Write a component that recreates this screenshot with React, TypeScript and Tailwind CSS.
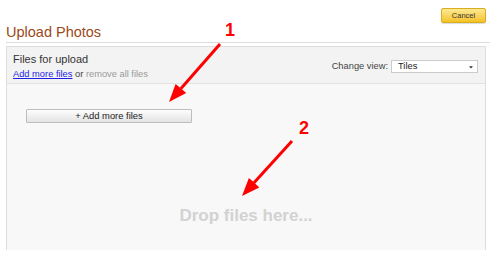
import { FaCaretDown } from "react-icons/fa";

function Arrows() {
  return (
    <svg className="absolute inset-0 pointer-events-none" width={496} height={260} viewBox="0 0 496 260">
      {/* arrow 1 */}
      <line x1={220} y1={44} x2={181} y2={88.5} stroke="#ff0000" strokeWidth={3} />
      <polygon points="169,102 186.2,93.1 180.5,88 175.6,83.9" fill="#ff0000" />
      {/* arrow 2 */}
      <line x1={292} y1={141} x2={254} y2={182.7} stroke="#ff0000" strokeWidth={3} />
      <polygon points="242,196 259.3,187.4 253.6,182 248.9,178" fill="#ff0000" />
    </svg>
  );
}

export default function App() {
  return (
    <div className="relative w-[496px] h-[260px] bg-white font-['Liberation_Sans',Arial,sans-serif] overflow-hidden">
      <div className="flex justify-end pt-[8px] pr-[10px]">
        <button className="w-[45px] h-[15px] rounded-[2px] border border-[#d9ad20] bg-gradient-to-b from-[#fee98e] to-[#f4c21c] text-[7.5px] leading-none text-[#333] shadow-[0_1px_1px_rgba(0,0,0,0.15)]">
          Cancel
        </button>
      </div>

      <div className="mx-[6px] mt-[1px] h-[19px] border-b border-[#dddddd]">
        <h1 className="text-[14.5px] leading-[17px] text-[#9a4a17]">Upload Photos</h1>
      </div>

      <div className="mx-[6px] mt-[3px] w-[480px] h-[204px] border border-b-0 border-[#dedede] flex flex-col">
        <div className="flex justify-between bg-[#f3f3f3] border-b border-[#e2e2e2] pl-[6px] pr-[7px] pt-[6px] pb-[3px]">
          <div>
            <p className="text-[11px] leading-[13px] text-[#333]">Files for upload</p>
            <p className="mt-[3px] text-[9.3px] leading-[11px] text-[#444]">
              <span className="text-[#1f1fe6] underline">Add more files</span> or{" "}
              <span className="text-[#9a9a9a]">remove all files</span>
            </p>
          </div>
          <div className="flex items-center gap-[3px] mt-[7px] self-start">
            <span className="text-[9.3px] leading-[11px] text-[#444]">Change view:</span>
            <div className="w-[87px] h-[13px] bg-white border border-[#cccccc] flex items-center justify-between pl-[6px] pr-[3px]">
              <span className="text-[9.3px] leading-[11px] text-[#222]">Tiles</span>
              <FaCaretDown className="w-[6px] h-[6px] text-[#333]" />
            </div>
          </div>
        </div>

        <div className="flex-1 bg-[#f8f8f8] flex flex-col">
          <button className="ml-[19px] mt-[25px] w-[166px] h-[14px] border border-[#bdbdbd] rounded-[1px] bg-gradient-to-b from-[#fdfdfd] to-[#e4e4e4] text-[9.4px] leading-none text-[#222]">
            + Add more files
          </button>
          <p className="mt-[83px] text-center text-[17px] leading-[20px] font-bold text-[#d2d2d2]">Drop files here...</p>
        </div>
      </div>

      <Arrows />
      <span className="absolute left-[225px] top-[21px] text-[18px] leading-[18px] font-bold text-[#ff0000]">1</span>
      <span className="absolute left-[299px] top-[119px] text-[18px] leading-[18px] font-bold text-[#ff0000]">2</span>
    </div>
  );
}
